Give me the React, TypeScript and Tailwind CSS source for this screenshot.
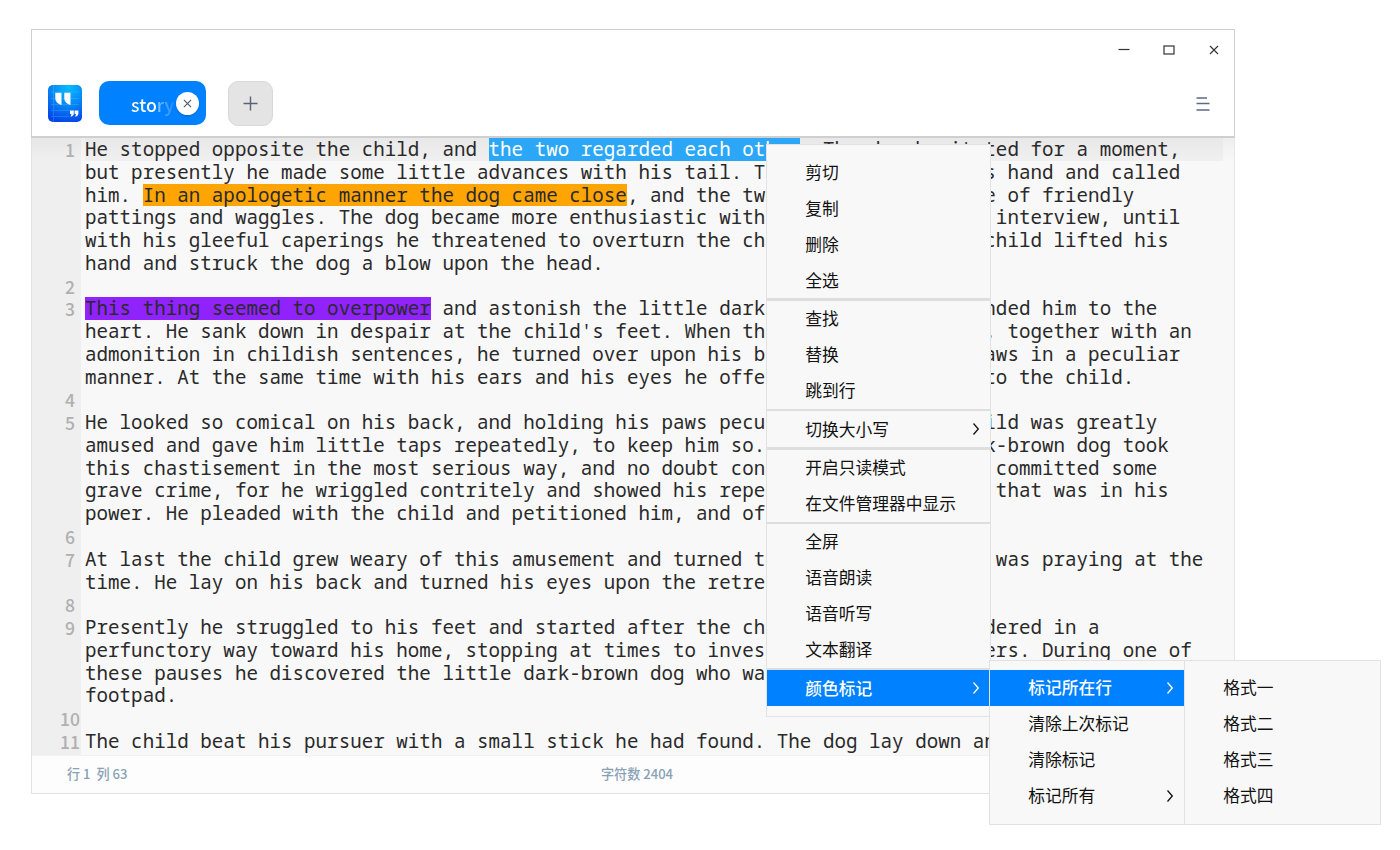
import React from "react";

type Mark = "select" | "orange" | "purple";
type Line = { n?: number; parts: [string, Mark?][] };

const lines: Line[] = [
  { n: 1, parts: [["He stopped opposite the child, and "], ["the two regarded each other", "select"], [". The dog hesitated for a moment,"]] },
  { parts: [["but presently he made some little advances with his tail. The child put out his hand and called"]] },
  { parts: [["him. "], ["In an apologetic manner the dog came close", "orange"], [", and the two had an interchange of friendly"]] },
  { parts: [["pattings and waggles. The dog became more enthusiastic with each moment of the interview, until"]] },
  { parts: [["with his gleeful caperings he threatened to overturn the child. Whereupon the child lifted his"]] },
  { parts: [["hand and struck the dog a blow upon the head."]] },
  { n: 2, parts: [] },
  { n: 3, parts: [["This thing seemed to overpower", "purple"], [" and astonish the little dark-brown dog, and wounded him to the"]] },
  { parts: [["heart. He sank down in despair at the child's feet. When the blow was repeated, together with an"]] },
  { parts: [["admonition in childish sentences, he turned over upon his back, and held his paws in a peculiar"]] },
  { parts: [["manner. At the same time with his ears and his eyes he offered a small prayer to the child."]] },
  { n: 4, parts: [] },
  { n: 5, parts: [["He looked so comical on his back, and holding his paws peculiarly, that the child was greatly"]] },
  { parts: [["amused and gave him little taps repeatedly, to keep him so. But the little dark-brown dog took"]] },
  { parts: [["this chastisement in the most serious way, and no doubt considered that he had committed some"]] },
  { parts: [["grave crime, for he wriggled contritely and showed his repentance in every way that was in his"]] },
  { parts: [["power. He pleaded with the child and petitioned him, and offered more prayers."]] },
  { n: 6, parts: [] },
  { n: 7, parts: [["At last the child grew weary of this amusement and turned toward home. The dog was praying at the"]] },
  { parts: [["time. He lay on his back and turned his eyes upon the retreating form."]] },
  { n: 8, parts: [] },
  { n: 9, parts: [["Presently he struggled to his feet and started after the child. The latter wandered in a"]] },
  { parts: [["perfunctory way toward his home, stopping at times to investigate various matters. During one of"]] },
  { parts: [["these pauses he discovered the little dark-brown dog who was following him with the air of a"]] },
  { parts: [["footpad."]] },
  { n: 10, parts: [] },
  { n: 11, parts: [["The child beat his pursuer with a small stick he had found. The dog lay down and prayed until"]] },
];

const markClass: Record<Mark, string> = {
  select: "bg-[#2ca7f8] text-white",
  orange: "bg-[#ffa503]",
  purple: "bg-[#9023fc]",
};

function Chevron() {
  return (
    <svg width="8" height="14" viewBox="0 0 8 14" fill="none" stroke="currentColor" strokeWidth="1.3">
      <path d="M1.5 1.5 6.3 7 1.5 12.5" />
    </svg>
  );
}

function Item({ label, arrow, active }: { label: string; arrow?: boolean; active?: boolean }) {
  return (
    <div
      className={
        "flex h-9 items-center justify-between pr-[10px] pl-[38.300px] whitespace-nowrap " +
        (active ? "bg-[#0081ff] font-medium text-white" : "text-[#111]")
      }
    >
      <span>{label}</span>
      {arrow && <Chevron />}
    </div>
  );
}

const groups: { label: string; arrow?: boolean; active?: boolean }[][] = [
  [{ label: "剪切" }, { label: "复制" }, { label: "删除" }, { label: "全选" }],
  [{ label: "查找" }, { label: "替换" }, { label: "跳到行" }],
  [{ label: "切换大小写", arrow: true }],
  [{ label: "开启只读模式" }, { label: "在文件管理器中显示" }],
  [{ label: "全屏" }, { label: "语音朗读" }, { label: "语音听写" }, { label: "文本翻译" }],
  [{ label: "颜色标记", arrow: true, active: true }],
];

function Logo() {
  return (
    <svg width="36" height="39" viewBox="0 0 36 39">
      <defs>
        <radialGradient id="g" cx="0.6" cy="0.05" r="0.98">
          <stop offset="0" stopColor="#06bdfc" />
          <stop offset="0.5" stopColor="#0788f5" />
          <stop offset="1" stopColor="#0446ea" />
        </radialGradient>
      </defs>
      <rect x="1" y="1" width="34" height="37" rx="5" fill="url(#g)" />
      <path d="M6.500 1v37M4 8h28M4 14.500h28M4 20.500h28M4 26.500h20M4 32.500h18" stroke="#5cc4fc" strokeWidth="0.8" opacity="0.35" />
      <path d="M8.300 8.800h6.200v12.200C10.800 20 8.300 17.500 8.300 14zM17.300 8.800h6.200v12.200c-3.700-1-6.200-3.500-6.200-7z" fill="#fff" />
      <path d="M23 26.500h3.800v2.700c0 1.700-1 2.800-3.200 3.600l.8-2.900H23zM27.600 26.500h3.800v2.700c0 1.700-1 2.800-3.200 3.600l.8-2.900h-1.400z" fill="#fff" />
    </svg>
  );
}

export default function App() {
  return (
    <div className="relative h-[850px] w-[1400px] overflow-hidden bg-white pt-[29px] pl-[31px] font-['Noto_Sans_CJK_SC',sans-serif]">
      <div className="flex h-[765px] w-[1204px] flex-col">
        <header className="h-[109px] w-full shrink-0 border border-b-2 border-[#cfcfcf] bg-white">
          <div className="flex h-10 items-center justify-end gap-[33px] pr-[14px] text-[#333]">
            <svg width="12" height="12" viewBox="0 0 12 12"><path d="M.5 5.500h11" stroke="currentColor" strokeWidth="1.200" /></svg>
            <svg width="12" height="12" viewBox="0 0 12 12"><rect x="1" y="2" width="10" height="8" fill="none" stroke="currentColor" strokeWidth="1.200" /></svg>
            <svg width="12" height="12" viewBox="0 0 12 12"><path d="m2 2 8 8m0-8-8 8" stroke="currentColor" strokeWidth="1.100" /></svg>
          </div>
          <div className="flex h-[66px] items-center pr-[24px] pl-[15px]">
            <Logo />
            <div className="ml-4 flex h-[44px] w-[107px] items-center rounded-[10px] bg-[#0081ff] pl-8">
              <span className="w-[45px] shrink-0 bg-linear-to-r from-white from-55% via-[#80c0ff] via-60% to-[#0081ff] bg-clip-text pt-px text-[17.800px] leading-7 font-medium text-transparent">story</span>
              <span className="flex size-[23px] shrink-0 items-center justify-center rounded-full bg-white text-[#4c5a72] shadow-[0_1px_2px_rgba(0,0,0,.2)]">
                <svg width="9" height="9" viewBox="0 0 8 8"><path d="m.8.8 6.400 6.400m0-6.400L.8 7.200" stroke="currentColor" strokeWidth="1" /></svg>
              </span>
            </div>
            <div className="mt-px ml-[22px] flex size-[45px] items-center justify-center rounded-[10px] border border-[#d8d8d8] bg-[#e4e4e4] text-[#596377]">
              <svg width="15" height="15" viewBox="0 0 15 15"><path d="M7.500.5v14M.5 7.500h14" stroke="currentColor" strokeWidth="1.400" /></svg>
            </div>
            <svg className="mt-px ml-auto" width="14" height="16" viewBox="0 0 14 16"><path d="M.5 2h10.500M.5 7.500h13M.5 14h13" stroke="#5f6986" strokeWidth="1.500" /></svg>
          </div>
        </header>

        <main className="flex h-[617px] overflow-hidden border-r border-l border-r-[#e6e6e6] border-l-[#e2e2e2] bg-[#f8f8f8] bg-linear-to-b from-[#eeeeee] to-[#f8f8f8] to-[24px]">
          <div className="w-[49px] shrink-0 bg-linear-to-b from-[#e6e6e6] to-[#efefef] to-[20px] text-center text-[17.500px] font-medium text-[#b0b0b0]">
            {lines.map((l, i) => (
              <div key={i} className="h-[22.780px] pl-[27px] leading-[24.500px]">
                <span className="flex w-[22px] justify-center">{l.n}</span>
              </div>
            ))}
          </div>
          <div className="grow pl-[4px] font-['Noto_Sans_Mono','DejaVu_Sans_Mono',monospace] text-[19.170px] tracking-[0.036px] text-[#2a2a2a]">
            {lines.map((l, i) => (
              <div key={i} className={"flex h-[22.780px] w-[1138px] leading-[22.780px] whitespace-pre " + (i === 0 ? "bg-linear-to-b from-[#e8e8e8] to-[#f0f0f0]" : "")}>
                {l.parts.map(([t, m], j) => (
                  <span key={j} className={m ? markClass[m] : ""}>{t}</span>
                ))}
              </div>
            ))}
          </div>
        </main>

        <footer className="flex h-[39px] items-center border border-t-[#f2f2f2] border-[#e2e2e2] bg-[#fdfdfd] text-[13.100px] text-[#8aa1b5]">
          <span className="w-[534px] pb-px pl-[35px] font-medium whitespace-pre">行 1  列 63</span>
          <span className="pb-px pl-[35px] font-medium">字符数 2404</span>
        </footer>
      </div>

      <div className="absolute top-[144px] left-[766px] h-[573px] w-[225px] border border-[#e2e2e2] bg-[#f8f8f8] pt-[9.400px] text-[16.750px]">
        {groups.map((g, i) => (
          <div key={i}>
            {i > 0 && <div className="h-[2.400px] bg-[#dedede]" />}
            {g.map((it) => <Item key={it.label} {...it} />)}
          </div>
        ))}
      </div>

      <div className="absolute top-[660px] left-[989px] flex h-[165px] w-[392px] border border-[#e2e2e2] bg-[#f8f8f8] text-[16.750px]">
        <div className="w-[195px] border-r border-[#e2e2e2] pt-[9px]">
          <Item label="标记所在行" arrow active />
          <Item label="清除上次标记" />
          <Item label="清除标记" />
          <Item label="标记所有" arrow />
        </div>
        <div className="pt-[9px]">
          <Item label="格式一" />
          <Item label="格式二" />
          <Item label="格式三" />
          <Item label="格式四" />
        </div>
      </div>
    </div>
  );
}
